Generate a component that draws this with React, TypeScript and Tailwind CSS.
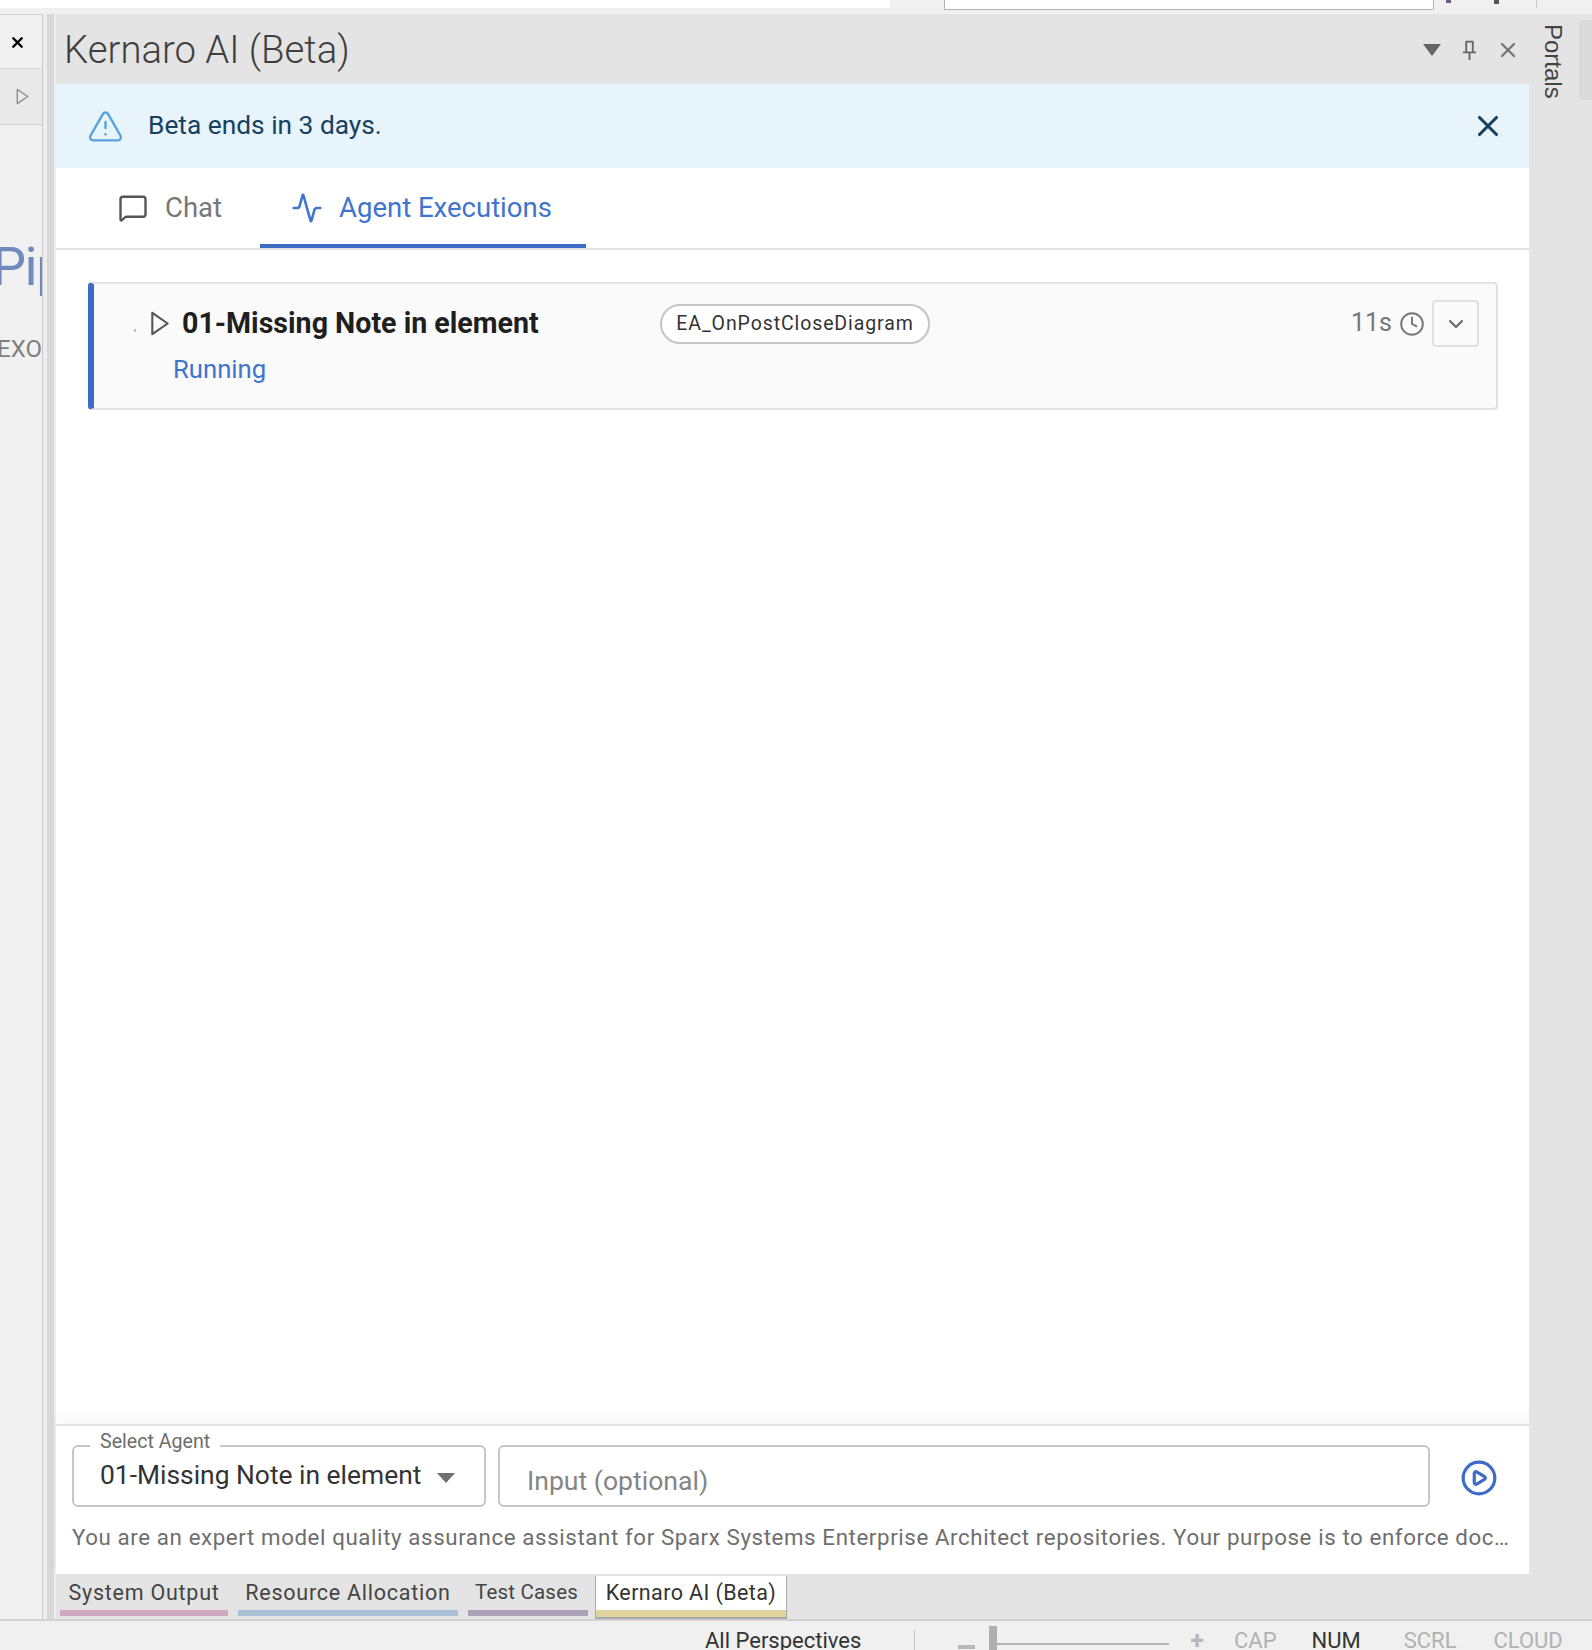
import { MessageSquare, Activity, TriangleAlert, X, ChevronDown, Clock, CirclePlay } from "lucide-react";

const docTabs = [
  { label: "System Output", bar: "bg-[#cfa9bf]", width: "w-[168px]", gap: "ml-[4px]", text: "text-[21.5px] tracking-[0.75px]" },
  { label: "Resource Allocation", bar: "bg-[#a9c0d6]", width: "w-[220px]", gap: "ml-[10px]", text: "text-[21.5px] tracking-[0.75px]" },
  { label: "Test Cases", bar: "bg-[#aca0b8]", width: "w-[120px]", gap: "ml-[10px]", text: "text-[20.5px] tracking-[0.2px] pr-[3px]" },
];

function Triangle({ className }: { className: string }) {
  return (
    <svg viewBox="0 0 20 26" fill="none" stroke="currentColor" strokeWidth="2.2" className={className}>
      <path d="M2 2 L18 13 L2 24 Z" strokeLinejoin="round" />
    </svg>
  );
}

function TopBar() {
  return (
    <div className="flex h-[14px] shrink-0 bg-[#f0f0f0]">
      <div className="h-[8px] w-[890px] bg-white" />
      <div className="ml-[54px] h-[10px] w-[490px] border border-t-0 border-[#b4b4b4] bg-white" />
      <div className="ml-[12px] h-[3px] w-[5px] bg-[#6a5a8c]" />
      <div className="ml-[43px] h-[4px] w-[5px] bg-[#555555]" />
      <div className="ml-[37px] h-[8px] w-px bg-[#cccccc]" />
    </div>
  );
}

function LeftStrip() {
  return (
    <div className="flex w-[43px] shrink-0 flex-col overflow-hidden border-r border-[#c8c8c8] bg-[#f1f1f1]">
      <div className="flex h-[55px] shrink-0 items-center justify-center border-y border-[#d4d4d4] pr-[8px] pt-[2px]">
        <X className="h-[17px] w-[17px] text-black" strokeWidth={3.4} />
      </div>
      <div className="flex h-[56px] shrink-0 items-center justify-center border-b border-[#cfcfcf] bg-[#e9e9e9] pl-[2px]">
        <Triangle className="h-[19px] w-[13px] text-[#8f8f8f]" />
      </div>
      <div className="-ml-[8px] mt-[112px] h-[60px] whitespace-nowrap text-[54px] leading-[60px] tracking-[-1.5px] text-[#6f8bbd]">
        Pipe
      </div>
      <div className="mt-[37px] whitespace-nowrap text-[24px] leading-[30px] text-[#808080] [direction:rtl]">
        EXO
      </div>
    </div>
  );
}

function RunCard() {
  return (
    <div className="-mt-px flex h-[128px] rounded-[4px] border-2 border-l-[6px] border-[#e2e2e2] border-l-[#3d6cc6] bg-[#fafafa]">
      <div className="flex-1 pl-[40px] pt-[19px]">
        <div className="flex h-[40px] items-center">
          <span className="mt-[14px] h-[3px] w-[2px] bg-[#a9c0e6]" />
          <Triangle className="ml-[14px] h-[25px] w-[20px] text-[#555555]" />
          <span className="ml-[12px] w-[478px] text-[28.6px] font-bold leading-none text-[#1f1f1f]">
            01-Missing Note in element
          </span>
          <span className="mt-[2px] flex h-[40px] w-[270px] items-center justify-center rounded-full border-2 border-[#c4c4c4] bg-white text-[19.5px] tracking-[0.9px] text-[#333333]">
            EA_OnPostCloseDiagram
          </span>
        </div>
        <div className="ml-[39px] mt-[11px] text-[25.7px] leading-[30px] text-[#3f74cf]">Running</div>
      </div>
      <div className="mt-[16px] flex h-[47px] items-center pr-[17px]">
        <span className="-mt-[3px] text-[25px] leading-none text-[#777777]">11s</span>
        <Clock className="ml-[7px] h-[26px] w-[26px] text-[#777777]" strokeWidth={1.8} />
        <span className="ml-[7px] flex h-[47px] w-[47px] items-center justify-center rounded-[4px] border-2 border-[#e0e0e0]">
          <ChevronDown className="h-[24px] w-[24px] text-[#666666]" strokeWidth={2} />
        </span>
      </div>
    </div>
  );
}

function AgentBar() {
  return (
    <div className="relative h-[152px] border-y-2 border-[#e2e2e2] bg-white shadow-[0_-6px_12px_rgba(0,0,0,0.04)]">
      <div className="flex h-[81px] items-end pl-[16px]">
        <div className="relative h-[62px] w-[414px] rounded-[6px] border-2 border-[#c6c6c6]">
          <span className="absolute -top-[17px] left-[16px] bg-white px-[10px] text-[19.6px] leading-[24px] text-[#6d6d6d]">
            Select Agent
          </span>
          <div className="flex h-full items-center pb-[2px] pl-[26px] text-[26.4px] leading-none text-[#333333]">
            01-Missing Note in element
            <span className="ml-[16px] mt-[6px] h-0 w-0 border-x-[9px] border-t-[10px] border-x-transparent border-t-[#707070]" />
          </div>
        </div>
        <div className="ml-[12px] flex h-[62px] w-[932px] items-center rounded-[6px] border-2 border-[#c6c6c6] pl-[27px] pt-[10px] text-[26.6px] leading-none text-[#858585]">
          Input (optional)
        </div>
        <CirclePlay className="mb-[10px] ml-[30px] h-[38px] w-[38px] text-[#3d6cc6]" strokeWidth={2} />
      </div>
      <div className="w-[1463px] overflow-hidden text-ellipsis whitespace-nowrap pl-[16px] pt-[16px] text-[22.3px] leading-[28px] tracking-[0.6px] text-[#6e6e6e]">
        You are an expert model quality assurance assistant for Sparx Systems Enterprise Architect repositories. Your purpose is to enforce documentation
      </div>
    </div>
  );
}

export default function App() {
  return (
    <div className="flex h-[1650px] w-[1592px] flex-col overflow-hidden bg-[#e4e4e4] font-['Roboto',sans-serif]">
      <TopBar />
      <div className="flex min-h-0 flex-1">
        <LeftStrip />
        <div className="flex w-[13px] shrink-0 justify-end bg-[#ededed] pr-[2px]">
          <div className="w-[7px] bg-[#d8d8d8]" />
        </div>
        {/* Dock panel */}
        <div className="flex w-[1473px] shrink-0 flex-col">
          <div className="flex h-[70px] shrink-0 items-center justify-between pl-[8px] pr-[9px] pt-[2px]">
            <span className="text-[38.3px] font-light leading-none text-[#3f3f3f]">Kernaro AI (Beta)</span>
            <div className="flex items-center">
              <span className="h-0 w-0 border-x-[9px] border-t-[12px] border-x-transparent border-t-[#666666]" />
              <svg viewBox="0 0 16 22" fill="none" stroke="#666666" strokeWidth="2" className="ml-[21px] h-[21px] w-[15px]">
                <path d="M4 1.5h8M4.5 1.5v11M11.5 1.5v11M1 13h14M8 13v8" />
              </svg>
              <X className="ml-[19px] h-[26px] w-[24px] text-[#777777]" strokeWidth={2.4} />
            </div>
          </div>
          <div className="flex h-[84px] shrink-0 items-center justify-between bg-[#e7f4fc] pl-[31px] pr-[24px]">
            <div className="flex items-center">
              <TriangleAlert className="h-[37px] w-[37px] text-[#5ba3dc]" strokeWidth={1.6} />
              <span className="ml-[24px] -mt-[2px] text-[26.3px] leading-none text-[#17415f]">Beta ends in 3 days.</span>
            </div>
            <X className="h-[34px] w-[34px] text-[#17415f]" strokeWidth={2.2} />
          </div>
          <div className="flex h-[82px] shrink-0 border-b-2 border-[#e2e2e2] bg-white text-[27.5px]">
            <div className="flex items-center pl-[62px] text-[#777777]">
              <MessageSquare className="h-[30px] w-[30px] text-[#555555]" strokeWidth={1.9} />
              <span className="ml-[17px]">Chat</span>
            </div>
            <div className="ml-[38px] flex w-[326px] items-center border-b-[4px] border-[#3d6cc6] pl-[31px] pt-[4px] text-[#3f74cf]">
              <Activity className="h-[32px] w-[32px]" strokeWidth={1.9} />
              <span className="ml-[16px]">Agent Executions</span>
            </div>
          </div>
          <div className="min-h-0 flex-1 bg-white pl-[32px] pr-[31px] pt-[33px]">
            <RunCard />
          </div>
          <AgentBar />
          {/* Document tabs */}
          <div className="flex h-[43px] shrink-0 leading-none text-[#444444]">
            {docTabs.map((t) => (
              <div key={t.label} className={`flex ${t.width} ${t.gap} flex-col pt-[6px]`}>
                <span className={`h-[30px] whitespace-nowrap text-center ${t.text}`}>{t.label}</span>
                <span className={`mt-auto mb-[3px] h-[7px] ${t.bar}`} />
              </div>
            ))}
            <div className="ml-[7px] flex w-[192px] flex-col border-x border-b-2 border-[#a9a9a9] bg-white pt-[6px] text-[#333333]">
              <span className="h-[30px] whitespace-nowrap text-center text-[21.5px] tracking-[0.4px]">Kernaro AI (Beta)</span>
              <span className="mt-auto h-[7px] bg-[#e0d39c]" />
            </div>
          </div>
        </div>
        {/* Portals rail */}
        <div className="relative flex-1 bg-[#e4e4e4]">
          <span className="ml-[12px] mt-[10px] block font-['Liberation_Sans',sans-serif] text-[24px] leading-none text-[#444444] [writing-mode:vertical-rl]">
            Portals
          </span>
          <div className="absolute right-0 top-[6px] h-[80px] w-[13px] bg-[#dadada]" />
        </div>
      </div>
      {/* Status bar */}
      <div className="flex h-[31px] shrink-0 items-end overflow-hidden border-t-2 border-[#d2d2d2] bg-[#f0f0f0] text-[22px] leading-[26px]">
        <span className="-mb-[4px] ml-[705px] text-[#333333]">All Perspectives</span>
        <span className="ml-[53px] h-[20px] w-px bg-[#c8c8c8]" />
        <span className="mb-[1px] ml-[43px] h-[4px] w-[17px] bg-[#b8b8b8]" />
        <span className="ml-[14px] h-[24px] w-[8px] bg-[#b0b0b0]" />
        <span className="mb-[5px] h-[2px] w-[172px] bg-[#b4b4b4]" />
        <span className="-mb-[4px] ml-[21px] text-[25px] font-bold text-[#b8b8b8]">+</span>
        <span className="-mb-[4px] ml-[30px] text-[#b2b2b2]">CAP</span>
        <span className="-mb-[4px] ml-[35px] text-[#333333]">NUM</span>
        <span className="-mb-[4px] ml-[43px] text-[#b2b2b2]">SCRL</span>
        <span className="-mb-[4px] ml-[37px] text-[#b2b2b2]">CLOUD</span>
      </div>
    </div>
  );
}
